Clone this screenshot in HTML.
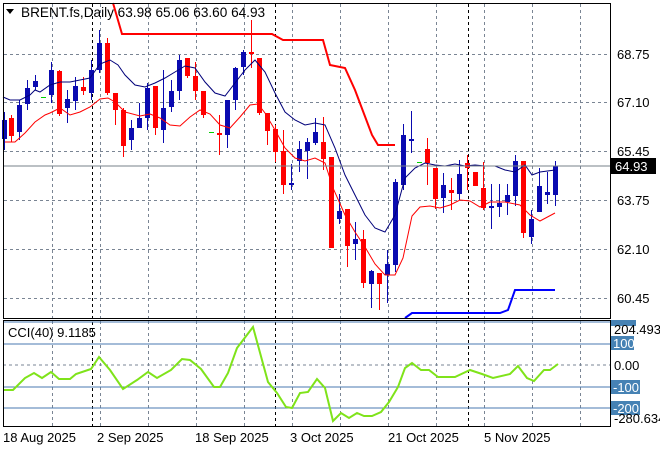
<!DOCTYPE html>
<html><head><meta charset="utf-8"><style>
html,body{margin:0;padding:0;background:#fff;width:660px;height:450px;overflow:hidden}
svg{display:block}
text{font-family:"Liberation Sans",sans-serif;font-size:13px;fill:#000}
</style></head><body>
<svg id="s" width="660" height="450" xmlns="http://www.w3.org/2000/svg">
<g id="grid" stroke="#7a8594" stroke-dasharray="3,3" stroke-width="1"></g>
<g id="c"></g>
<polyline fill="none" stroke="#00007a" stroke-width="1" points="3,97 10,100 20,100 30,95 35,90 40,92 50,85 60,82 70,82 80,80 90,78 100,64 110,60 118,65 125,75 135,85 145,87 155,83 165,78 175,72 185,66 195,68 205,82 215,93 225,96 235,83 245,70 255,60 265,72 275,93 285,112 295,120 305,125 315,123 325,125 335,148 345,175 355,195 365,215 375,228 385,232 395,215 405,178 415,168 425,163 435,165 445,166 455,164 465,166 475,165 485,166 495,166 505,170 515,172 525,165 532,175 540,172 555,170"/>
<polyline fill="none" stroke="#ff0000" stroke-width="1" points="5,142 15,142 25,133 35,122 45,115 50,113 60,108 70,115 80,112 90,107 100,99 108,98 115,102 125,112 140,116 150,114 160,118 170,125 180,126 190,117 200,110 210,114 220,125 230,128 240,117 250,105 258,104 265,113 275,130 285,148 295,158 305,161 315,158 325,163 333,188 345,215 355,232 365,247 375,264 385,275 395,275 403,258 412,216 420,207 430,206 440,208 450,205 460,200 470,201 480,207 490,202 505,202 520,205 530,215 540,221 555,213"/>
<polyline fill="none" stroke="#ff0000" stroke-width="2" points="113,3 122,34 272,34 283,40 323,40 330,65 345,68 355,90 372,135 378,145 395,145"/>
<polyline fill="none" stroke="#0000ff" stroke-width="2" points="405,318 412,313 500,313 508,310 515,290 555,290"/>
<line x1="3" y1="166" x2="610" y2="166" stroke="#77808a"/>
<g stroke="#4a7ab0" stroke-width="1">
<line x1="3" y1="322" x2="610" y2="322"/>
<line x1="3" y1="344" x2="610" y2="344"/>
<line x1="3" y1="387" x2="610" y2="387"/>
<line x1="3" y1="408" x2="610" y2="408"/>
</g>
<line x1="3" y1="365" x2="610" y2="365" stroke="#7a8594" stroke-dasharray="3,3"/>
<polyline fill="none" stroke="#7fe31a" stroke-width="2" points="3,390 13,390 25,378 34,373 42,378 51,372 59,379 70,379 76,374 91,369 99,357 110,370 123,389 137,380 148,372 157,378 171,370 182,359 190,360 201,369 214,387 220,387 228,373 237,348 253,327 268,382 277,393 286,407 292,408 300,393 308,392 317,379 325,388 333,421 341,413 349,418 357,413 364,416 372,416 381,412 389,402 398,387 405,368 412,363 421,370 429,370 438,377 455,377 470,370 482,374 493,378 510,374 518,366 527,378 534,381 544,370 550,370 558,364"/>
<g fill="none" stroke="#000" stroke-width="1">
<rect x="3.5" y="3.5" width="607" height="315"/>
<rect x="3.5" y="320.5" width="607" height="106"/>
</g>
<polygon points="6,9 14,9 10,14" fill="#000"/>
<text x="21" y="17" style="font-size:13.6px">BRENT.fs,Daily  63.98 65.06 63.60 64.93</text>
<text x="8" y="337">CCI(40) 9.1185</text>
<g id="pl"></g>
<rect x="611" y="158" width="45" height="16" fill="#000"/>
<text x="615" y="171" style="fill:#fff">64.93</text>
<rect x="611" y="320" width="25" height="6" fill="#4682b4"/>
<text x="614" y="334">204.493</text>
<rect x="611" y="336" width="23" height="14" fill="#4682b4"/><text x="613" y="348" style="fill:#fff">100</text>
<text x="614" y="370">0.00</text>
<rect x="611" y="380" width="29" height="14" fill="#4682b4"/><text x="613" y="392" style="fill:#fff">-100</text>
<rect x="611" y="401" width="29" height="14" fill="#4682b4"/><text x="613" y="413" style="fill:#fff">-200</text>
<text x="614" y="423">-280.634</text>
<text x="3" y="442">18 Aug 2025</text>
<text x="97" y="442">2 Sep 2025</text>
<text x="195" y="442">18 Sep 2025</text>
<text x="290" y="442">3 Oct 2025</text>
<text x="388" y="442">21 Oct 2025</text>
<text x="484" y="442">5 Nov 2025</text>
</svg>
<script>
var NS="http://www.w3.org/2000/svg";
function el(p,t,a){var e=document.createElementNS(NS,t);for(var k in a)e.setAttribute(k,a[k]);p.appendChild(e);return e;}
var g=document.getElementById('grid');
[52,100,148,196,244,292,340,388,436,484,532,580].forEach(function(x){el(g,'line',{x1:x+.5,y1:4,x2:x+.5,y2:318});el(g,'line',{x1:x+.5,y1:321,x2:x+.5,y2:426});});
[54,102,151,200,249,298].forEach(function(y){el(g,'line',{x1:4,y1:y+.5,x2:610,y2:y+.5});});
[92,275,468].forEach(function(x){el(g,'line',{x1:x+.5,y1:4,x2:x+.5,y2:426,stroke:'#000'});});
var pl=document.getElementById('pl');
[["68.75",54],["67.10",102],["65.45",151],["63.75",200],["62.10",249],["60.45",298]].forEach(function(a){var t=el(pl,'text',{x:617,y:a[1]+5});t.textContent=a[0];});
var C=[[4,'b',120,139,112,150],[11,'r',118,136,115,142],[19,'b',105,132,100,140],[27,'b',88,104,80,110],[35,'b',81,87,75,90],[43,'g',97,97,97,97],[51,'b',70,95,62,103],[59,'r',71,114,70,116],[67,'b',99,108,90,123],[75,'b',86,101,77,110],[83,'r',87,91,77,95],[91,'b',70,93,60,100],[99,'b',43,70,30,73],[107,'r',43,93,38,95],[115,'r',93,110,93,125],[123,'r',110,146,108,157],[131,'b',128,140,120,150],[139,'b',118,128,103,128],[147,'b',88,118,83,130],[155,'r',86,128,86,135],[163,'b',108,130,70,143],[171,'b',91,107,80,112],[179,'b',60,91,55,100],[187,'r',58,76,58,78],[195,'r',76,91,62,100],[203,'r',91,115,91,118],[211,'g',132,132,132,132],[219,'r',133,135,115,155],[227,'b',100,135,100,148],[235,'b',68,100,67,110],[243,'b',52,67,50,75],[251,'r',52,54,20,68],[259,'r',58,113,58,115],[267,'r',113,131,113,145],[275,'r',129,152,125,162],[283,'r',151,185,130,194],[291,'b',183,185,164,190],[299,'b',149,161,141,172],[307,'b',142,151,138,179],[315,'b',132,143,118,145],[323,'r',142,159,117,170],[331,'r',157,248,157,248],[339,'b',211,219,194,224],[347,'r',209,246,209,267],[355,'b',239,244,222,260],[363,'r',239,283,230,288],[371,'b',271,284,270,308],[379,'r',273,284,273,310],[387,'b',264,275,250,303],[395,'b',182,265,179,272],[403,'b',135,185,124,190],[411,'b',139,141,111,153],[419,'g',162,162,162,162],[427,'r',149,163,138,185],[435,'r',168,199,168,209],[443,'b',185,198,173,213],[451,'r',190,193,178,210],[459,'b',174,194,160,200],[467,'r',163,168,155,190],[475,'r',172,186,172,186],[483,'r',188,208,162,210],[491,'b',206,208,184,229],[499,'b',203,207,184,217],[507,'b',195,202,184,215],[515,'b',161,196,155,206],[523,'r',161,233,161,238],[531,'b',219,237,210,244],[539,'b',186,212,168,212],[547,'b',192,195,172,204],[555,'b',166,195,161,206]];
var cg=document.getElementById('c');
C.forEach(function(c){var col=c[1]=='r'?'#ff0000':c[1]=='b'?'#0a0ab0':'#00d000';
if(c[1]=='g'){el(cg,'rect',{x:c[0]-2,y:c[2],width:5,height:1,fill:col});return;}
el(cg,'rect',{x:c[0],y:c[4],width:1,height:c[5]-c[4],fill:col});
el(cg,'rect',{x:c[0]-2,y:c[2],width:5,height:Math.max(2,c[3]-c[2]),fill:col});});
</script>
</body></html>
